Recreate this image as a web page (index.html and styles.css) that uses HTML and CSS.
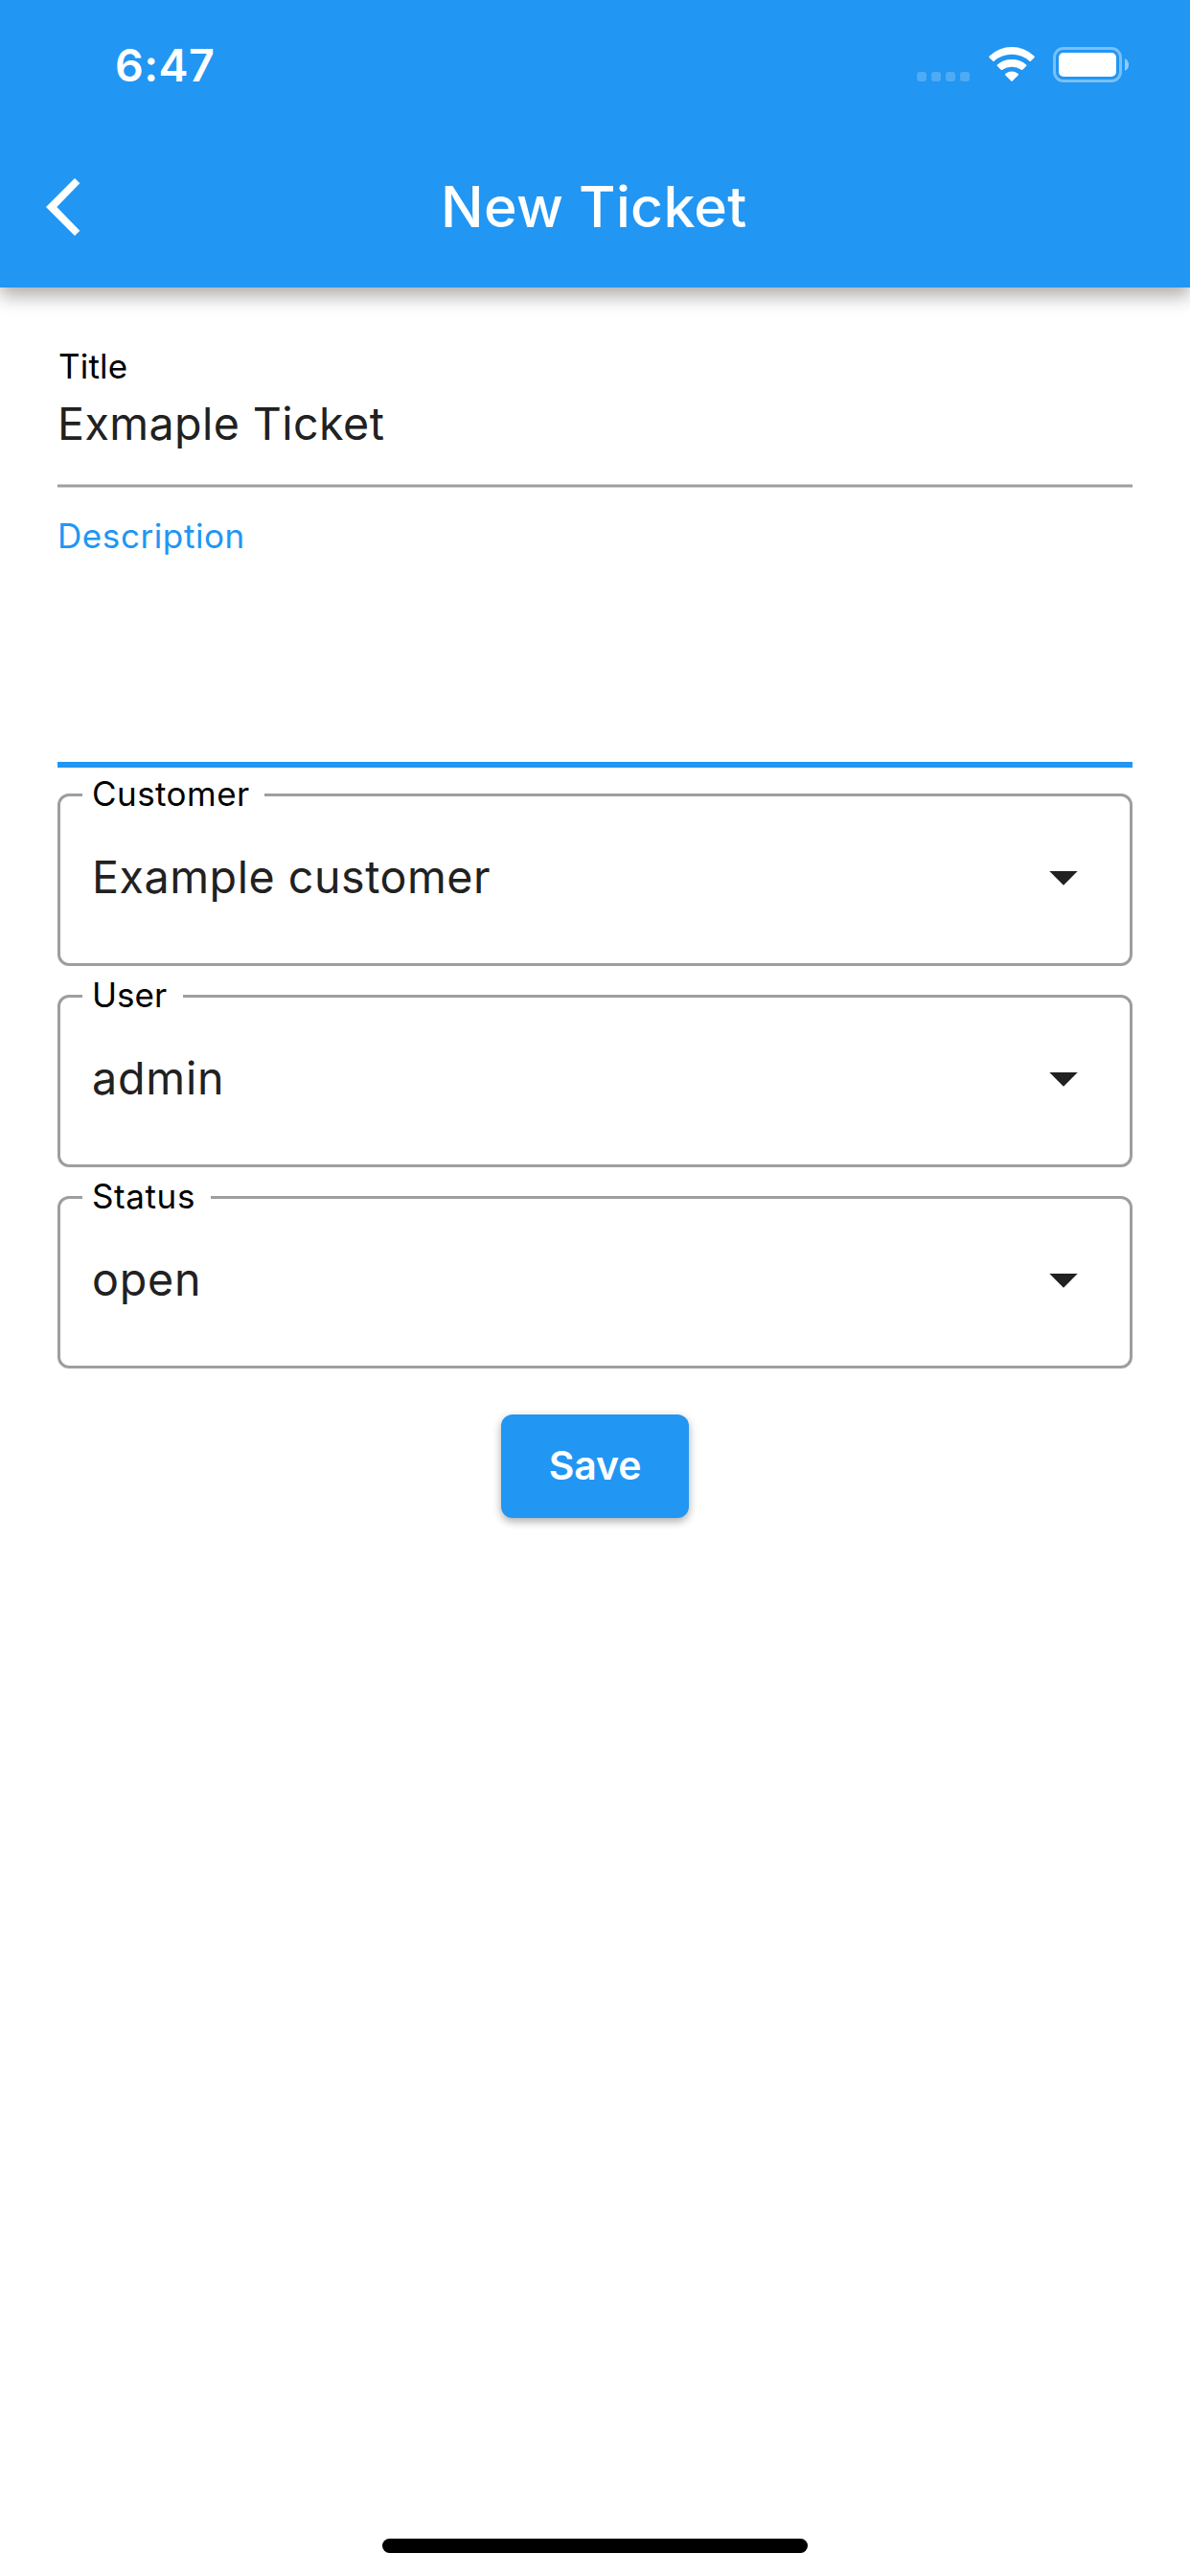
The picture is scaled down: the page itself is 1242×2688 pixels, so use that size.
FILE: index.html
```html
<!DOCTYPE html>
<html lang="en">
<head>
<meta charset="utf-8">
<title>New Ticket</title>
<link rel="stylesheet" href="styles.css">
</head>
<body>
<header class="header">
  <div class="status-bar">
    <span class="time">6:47</span>
    <div class="indicators">
      <svg class="cellular" viewBox="0 0 55 10"><rect width="10" height="10" rx="3"/><rect x="15" width="10" height="10" rx="3"/><rect x="30" width="10" height="10" rx="3"/><rect x="45" width="10" height="10" rx="3"/></svg>
      <svg class="wifi" viewBox="0 0 48 36">
        <path d="M.6 9.4A34 34 0 0 1 47.4 9.4Q48.3 10.3 47.4 11.2L43.8 14.8Q43.2 15.4 42.4 14.7A28 28 0 0 0 5.6 14.7Q4.8 15.4 4.2 14.8L.6 11.2Q-.3 10.3 .6 9.4Z"/>
        <path d="M8.9 18.4A24 24 0 0 1 39.1 18.4Q39.9 19.2 39.1 20L35.3 23.8Q34.6 24.4 33.8 23.8A17 17 0 0 0 14.2 23.8Q13.4 24.4 12.7 23.8L8.9 20Q8.1 19.2 8.9 18.4Z"/>
        <path d="M17.6 27.8Q24 23.2 30.4 27.8Q31.5 28.7 30.6 29.6L24.7 35.5Q24 36.2 23.3 35.5L17.4 29.6Q16.5 28.7 17.6 27.8Z"/>
      </svg>
      <svg class="battery" viewBox="0 0 79 37">
        <rect x="1.5" y="1.5" width="69" height="34" rx="9.5" fill="none" stroke="#fff" stroke-width="3" opacity=".4"/>
        <rect x="6" y="6" width="60" height="25" rx="5"/>
        <path d="M75 12Q79 14 79 18.5Q79 23 75 25Z" opacity=".5"/>
      </svg>
    </div>
  </div>
  <div class="app-bar">
    <svg class="back" viewBox="0 0 36 60"><path d="M30 0L35.3 5.3L11.3 30L35.3 54.7L30 60L0 30Z"/></svg>
    <h1 class="title">New Ticket</h1>
  </div>
</header>
<main class="form">
  <div class="field">
    <span class="label">Title</span>
    <span class="value">Exmaple Ticket</span>
    <div class="rule"></div>
  </div>
  <div class="field field-active">
    <span class="label label-description">Description</span>
    <div class="rule"></div>
  </div>
  <fieldset class="select">
    <legend class="legend legend-customer">Customer</legend>
    <div class="row"><span class="value">Example customer</span><svg class="arrow" viewBox="0 0 30 18"><path d="M.3 3H29.7L15 17.7Z"/></svg></div>
  </fieldset>
  <fieldset class="select">
    <legend class="legend legend-user">User</legend>
    <div class="row"><span class="value value-wide">admin</span><svg class="arrow" viewBox="0 0 30 18"><path d="M.3 3H29.7L15 17.7Z"/></svg></div>
  </fieldset>
  <fieldset class="select">
    <legend class="legend legend-status">Status</legend>
    <div class="row"><span class="value value-wide">open</span><svg class="arrow" viewBox="0 0 30 18"><path d="M.3 3H29.7L15 17.7Z"/></svg></div>
  </fieldset>
  <button class="save" type="button">Save</button>
</main>
<div class="home-indicator"></div>
</body>
</html>
```
FILE: styles.css
```css
* { box-sizing: border-box; }

body {
  margin: 0;
  height: 2688px;
  display: flex;
  flex-direction: column;
  background: #fff;
  color: #212121;
  font-family: Inter, "Liberation Sans", sans-serif;
  overflow: hidden;
}

svg { display: block; fill: #fff; flex: none; }

.header {
  height: 300px;
  flex: none;
  background: #2196f3;
  color: #fff;
  box-shadow: 0 9px 18px rgba(0, 0, 0, .32);
}

.status-bar {
  height: 132px;
  padding: 40px 64px 0 120px;
  display: flex;
  justify-content: space-between;
}

.time {
  font-size: 46.6px;
  font-weight: 600;
  line-height: 56px;
  letter-spacing: .44px;
}

.indicators {
  height: 46px;
  display: flex;
  align-items: flex-end;
}

.cellular { width: 55px; height: 10px; margin: 0 19.5px 1px 0; opacity: .2; }
.wifi { width: 48px; height: 36px; margin: 0 19.5px 1px 0; }
.battery { width: 79px; height: 37px; }

.app-bar {
  height: 168px;
  padding-left: 48px;
  display: flex;
  align-items: center;
}

.back { width: 36px; height: 60px; }

.title {
  margin: 0 0 0 376px;
  font-size: 59px;
  font-weight: 500;
  line-height: 72px;
  letter-spacing: .29px;
}

.form {
  flex: 1;
  padding: 61px 60px 0;
  display: flex;
  flex-direction: column;
}

.field {
  height: 148px;
  flex: none;
  display: flex;
  flex-direction: column;
}

.label {
  margin-left: 1px;
  color: #000;
  font-size: 35px;
  line-height: 42px;
  letter-spacing: .2px;
}

.label-description { margin-left: 0; color: #2196f3; letter-spacing: .59px; }

.value {
  font-size: 46.6px;
  line-height: 58px;
  letter-spacing: .54px;
}

.field .value { margin-top: 10px; letter-spacing: .42px; }
.value-wide { letter-spacing: .8px; }

.rule {
  height: 4px;
  margin-top: auto;
  background: linear-gradient(#cecece 1px, #9e9e9e 1px, #9e9e9e 3px, #cecece 3px);
}

.field-active { height: 263px; margin: 29px 0 7px; }
.field-active .rule { height: 6px; background: #2196f3; }

.select {
  height: 200px;
  flex: none;
  min-width: 0;
  margin: 0 0 10px;
  padding: 0 54px 0 23px;
  border: 3px solid #9e9e9e;
  border-radius: 12px;
}

.legend {
  height: 43px;
  padding: 0 0 0 10px;
  color: #000;
  font-size: 35px;
  line-height: 41px;
}

.legend-customer { width: 190px; letter-spacing: .44px; }
.legend-user { width: 105px; letter-spacing: .03px; }
.legend-status { width: 134px; letter-spacing: .6px; }

.row {
  padding: 35px 0 0 10px;
  display: flex;
  justify-content: space-between;
  align-items: center;
}

.arrow { width: 30px; height: 18px; fill: #212121; }

.save {
  width: 195.4px;
  height: 108px;
  margin-top: 38px;
  padding: 0 0 2px;
  align-self: center;
  border: 0;
  border-radius: 12px;
  background: #2196f3;
  color: #fff;
  font: 600 41px/50px Inter, "Liberation Sans", sans-serif;
  letter-spacing: -.1px;
  box-shadow: 0 4px 8px rgba(0, 0, 0, .26), 0 2px 12px rgba(0, 0, 0, .08);
}

.home-indicator {
  width: 444px;
  height: 15px;
  margin: 0 auto 24px;
  flex: none;
  border-radius: 8px;
  background: #000;
}
```
